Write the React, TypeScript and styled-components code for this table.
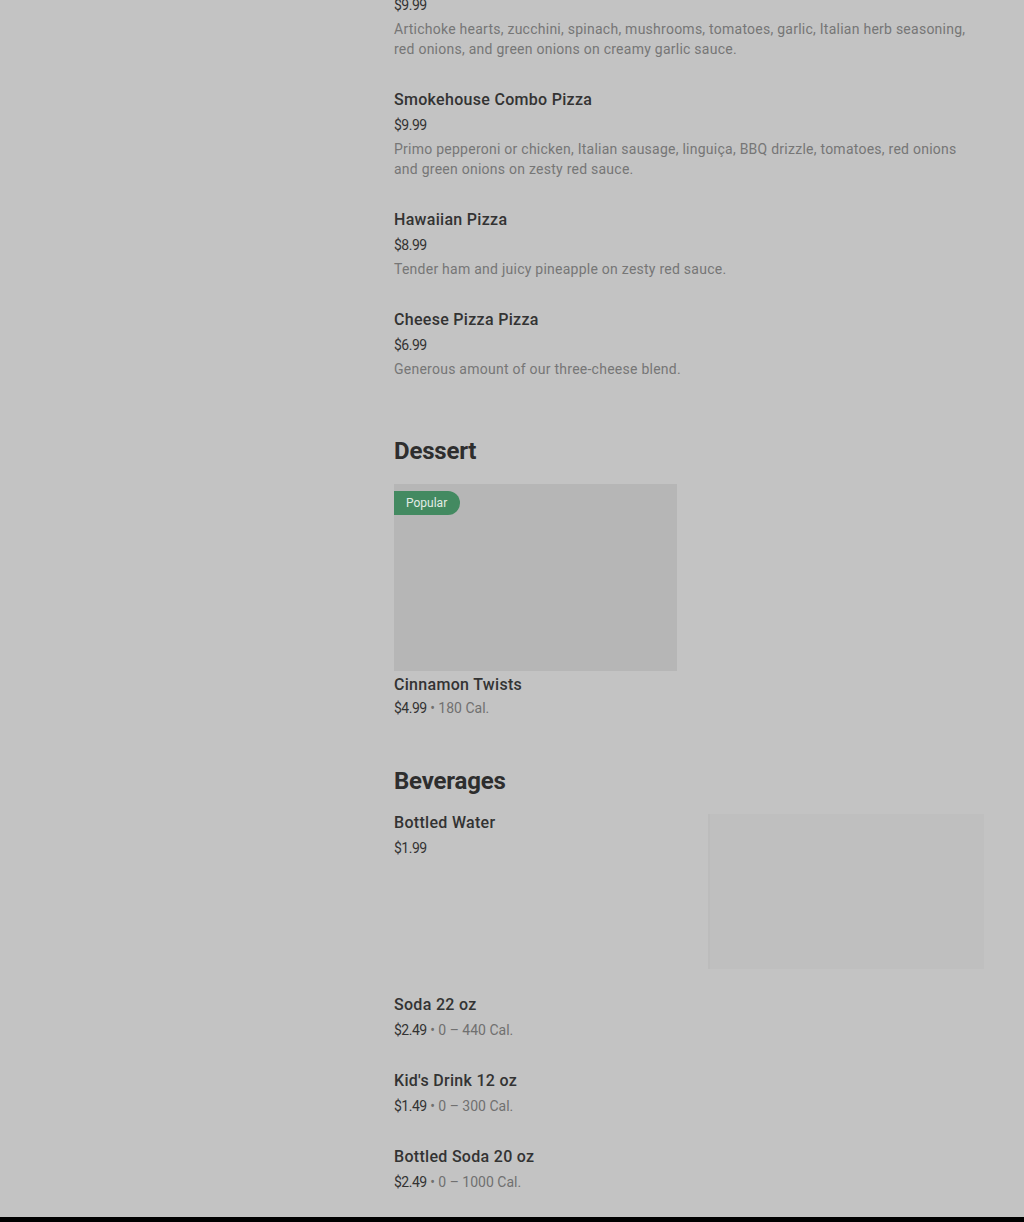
import styled, { createGlobalStyle } from "styled-components";

const GlobalStyle = createGlobalStyle`
  html, body {
    margin: 0;
    padding: 0;
    background: #c3c3c3;
  }
  body {
    font-family: Roboto, "Liberation Sans", sans-serif;
    color: #2f2f2f;
    overflow: hidden;
  }
`;

type Item = {
  name: string;
  price: string;
  cal?: string;
  desc?: string;
};

const pizzas: Item[] = [
  {
    name: "Veggie Pizza",
    price: "$9.99",
    desc: "Artichoke hearts, zucchini, spinach, mushrooms, tomatoes, garlic, Italian herb seasoning, red onions, and green onions on creamy garlic sauce.",
  },
  {
    name: "Smokehouse Combo Pizza",
    price: "$9.99",
    desc: "Primo pepperoni or chicken, Italian sausage, linguiça, BBQ drizzle, tomatoes, red onions and green onions on zesty red sauce.",
  },
  {
    name: "Hawaiian Pizza",
    price: "$8.99",
    desc: "Tender ham and juicy pineapple on zesty red sauce.",
  },
  {
    name: "Cheese Pizza Pizza",
    price: "$6.99",
    desc: "Generous amount of our three-cheese blend.",
  },
];

const drinks: Item[] = [
  { name: "Soda 22 oz", price: "$2.49", cal: "0 – 440 Cal." },
  { name: "Kid's Drink 12 oz", price: "$1.49", cal: "0 – 300 Cal." },
  { name: "Bottled Soda 20 oz", price: "$2.49", cal: "0 – 1000 Cal." },
];

const Price = ({ item, tight }: { item: Item; tight?: boolean }) => (
  <PriceLine $tight={tight}>
    {item.price}
    {item.cal && <Cal> • {item.cal}</Cal>}
  </PriceLine>
);

const App = () => {
  return (
    <>
      <GlobalStyle />
      <Page>
        <Sidebar />
        <Menu>
          <ItemList>
            {pizzas.map((p) => (
              <MenuItem key={p.name}>
                <ItemName>{p.name}</ItemName>
                <Price item={p} />
                <Desc>{p.desc}</Desc>
              </MenuItem>
            ))}
          </ItemList>

          <Section>
            <SectionTitle>Dessert</SectionTitle>
            <CardGrid>
              <Card>
                <CardImage>
                  <Badge>Popular</Badge>
                </CardImage>
                <ItemName>Cinnamon Twists</ItemName>
                <Price tight item={{ name: "", price: "$4.99", cal: "180 Cal." }} />
              </Card>
            </CardGrid>
          </Section>

          <Section $after="card">
            <SectionTitle>Beverages</SectionTitle>
            <ItemList>
              <MenuItem $withImage>
                <ItemText>
                  <ItemName>Bottled Water</ItemName>
                  <Price item={{ name: "", price: "$1.99" }} />
                </ItemText>
                <Thumb />
              </MenuItem>
              {drinks.map((d) => (
                <MenuItem key={d.name}>
                  <ItemName>{d.name}</ItemName>
                  <Price item={d} />
                </MenuItem>
              ))}
            </ItemList>
          </Section>
        </Menu>
      </Page>
      <Footer />
    </>
  );
};

const Page = styled.div`
  display: grid;
  grid-template-columns: 394px 590px;
  padding-bottom: 10px;
`;

const Sidebar = styled.aside``;

const Menu = styled.main`
  display: flex;
  flex-direction: column;
  margin-top: -46px;
`;

const ItemList = styled.div`
  display: flex;
  flex-direction: column;
`;

const MenuItem = styled.div<{ $withImage?: boolean }>`
  display: flex;
  flex-direction: ${(p) => (p.$withImage ? "row" : "column")};
  justify-content: space-between;
  padding: ${(p) => (p.$withImage ? "14px 0 10px" : "14px 0 15px")};
`;

const ItemText = styled.div`
  display: flex;
  flex-direction: column;
`;

const ItemName = styled.div`
  font-size: 16px;
  line-height: 24px;
  font-weight: 500;
  color: #333;
  letter-spacing: 0.3px;
`;

const PriceLine = styled.div<{ $tight?: boolean }>`
  margin-top: ${(p) => (p.$tight ? "1px" : "3px")};
  font-size: 14px;
  line-height: 20px;
  color: #333;
  letter-spacing: -0.5px;
`;

const Cal = styled.span`
  color: #707070;
  letter-spacing: 0;
`;

const Desc = styled.div`
  margin-top: 4px;
  max-width: 580px;
  font-size: 14px;
  line-height: 20px;
  color: #767676;
  letter-spacing: 0.25px;
`;

const Section = styled.section<{ $after?: "card" }>`
  display: flex;
  flex-direction: column;
  margin-top: ${(p) => (p.$after === "card" ? "47px" : "41px")};
`;

const SectionTitle = styled.h2`
  margin: 0;
  font-size: 24px;
  line-height: 32px;
  font-weight: 700;
  color: #2e2e2e;
  letter-spacing: -0.2px;
`;

const CardGrid = styled.div`
  display: grid;
  grid-template-columns: 1fr 1fr;
  gap: 24px;
  margin-top: 17px;
`;

const Card = styled.div`
  display: flex;
  flex-direction: column;
`;

const CardImage = styled.div`
  position: relative;
  height: 187px;
  margin-bottom: 2px;
  background: #b6b6b6;
`;

const Badge = styled.span`
  position: absolute;
  top: 7px;
  left: 0;
  padding: 0 13px 0 12px;
  height: 24px;
  line-height: 24px;
  font-size: 12px;
  color: #e2ece6;
  background: #438a61;
  border-radius: 0 12px 12px 0;
`;

const Thumb = styled.div`
  width: 276px;
  height: 155px;
  margin-top: 3px;
  background: #bfbfbf;
  border-left: 2px solid #bcbcbc;
  box-sizing: border-box;
`;

const Footer = styled.footer`
  height: 300px;
  background: #000;
`;

export default App;
